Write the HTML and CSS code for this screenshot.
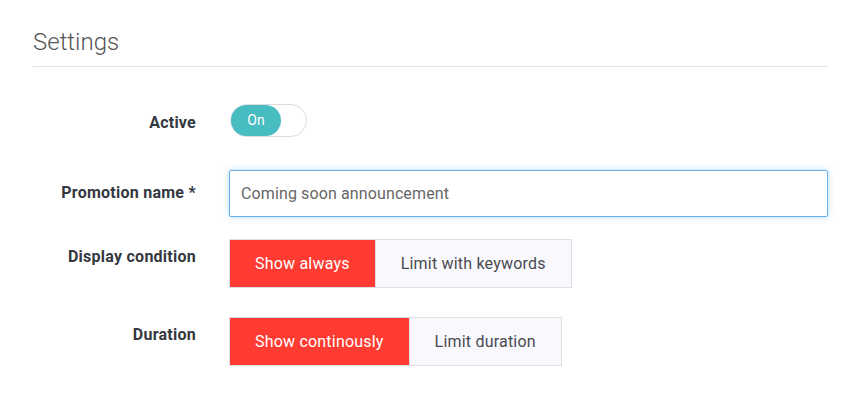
FILE: index.html
```html
<!DOCTYPE html>
<html lang="en">
<head>
    <meta charset="UTF-8">
    <meta name="viewport" content="width=device-width, initial-scale=1.0">
    <title>Settings</title>
    <link rel="stylesheet" href="styles.css">
</head>
<body>
    <div class="settings">
        <h2 class="title">Settings</h2>

        <form class="form">
            <div class="row row-active">
                <label class="label">Active</label>
                <div class="control">
                    <div class="toggle">
                        <span class="knob">On</span>
                    </div>
                </div>
            </div>

            <div class="row row-name">
                <label class="label" for="promoName">Promotion name *</label>
                <div class="control">
                    <input id="promoName" class="input" type="text" value="Coming soon announcement">
                </div>
            </div>

            <div class="row row-display">
                <label class="label">Display condition</label>
                <div class="control">
                    <div class="btn-group">
                        <button type="button" class="btn active">Show always</button>
                        <button type="button" class="btn">Limit with keywords</button>
                    </div>
                </div>
            </div>

            <div class="row">
                <label class="label">Duration</label>
                <div class="control">
                    <div class="btn-group">
                        <button type="button" class="btn active">Show continously</button>
                        <button type="button" class="btn">Limit duration</button>
                    </div>
                </div>
            </div>
        </form>
    </div>
</body>
</html>
```

FILE: styles.css
```css
body {
    margin: 0;
    padding: 0 18px 0 33px;
    font-family: Roboto, "Liberation Sans", Arial, sans-serif;
    background: #fff;
    color: #333;
}

.title {
    margin: 28px 0 0;
    padding-bottom: 10px;
    font-size: 24px;
    font-weight: 300;
    line-height: 28px;
    color: #555;
    border-bottom: 1px solid #e2e2e2;
}

.form {
    margin-top: 37px;
}

.row {
    display: grid;
    grid-template-columns: 163px 1fr;
    column-gap: 33px;
    align-items: start;
    margin-bottom: 29px;
}

.row-active {
    margin-bottom: 33px;
}

.row-name {
    margin-bottom: 22px;
}

.label {
    text-align: right;
    font-size: 16px;
    font-weight: 700;
    letter-spacing: 0.25px;
    line-height: 20px;
    padding-top: 8px;
    color: #343840;
}

.row-active .label {
    padding-top: 9px;
}

.row-name .label {
    padding-top: 13px;
}

.control {
    display: flex;
}

.toggle {
    width: 75px;
    height: 31px;
    border: 1px solid #dcdcdc;
    border-radius: 17px;
    background: #fff;
    display: flex;
    margin-left: 1px;
}

.knob {
    width: 50px;
    height: 31px;
    border-radius: 16px;
    background: #47bcc1;
    color: #fff;
    font-size: 14px;
    line-height: 30px;
    text-align: center;
}

.input {
    width: 100%;
    height: 47px;
    box-sizing: border-box;
    border: 1px solid #66afe9;
    border-radius: 2px;
    padding: 0 11px;
    font-family: inherit;
    font-size: 16px;
    letter-spacing: 0.12px;
    color: #666;
    outline: none;
    box-shadow: 0 0 6px rgba(102, 175, 233, 0.45);
}

.btn-group {
    display: flex;
    border: 1px solid #dedee6;
}

.btn {
    height: 47px;
    border: none;
    margin: 0;
    padding: 0 25px;
    font-family: inherit;
    font-size: 16px;
    letter-spacing: 0.2px;
    color: #4a4a50;
    background: #f8f8fd;
    cursor: pointer;
}

.btn + .btn {
    border-left: 1px solid #dedee6;
}

.btn.active {
    background: #ff3b32;
    color: #fff;
}
```
